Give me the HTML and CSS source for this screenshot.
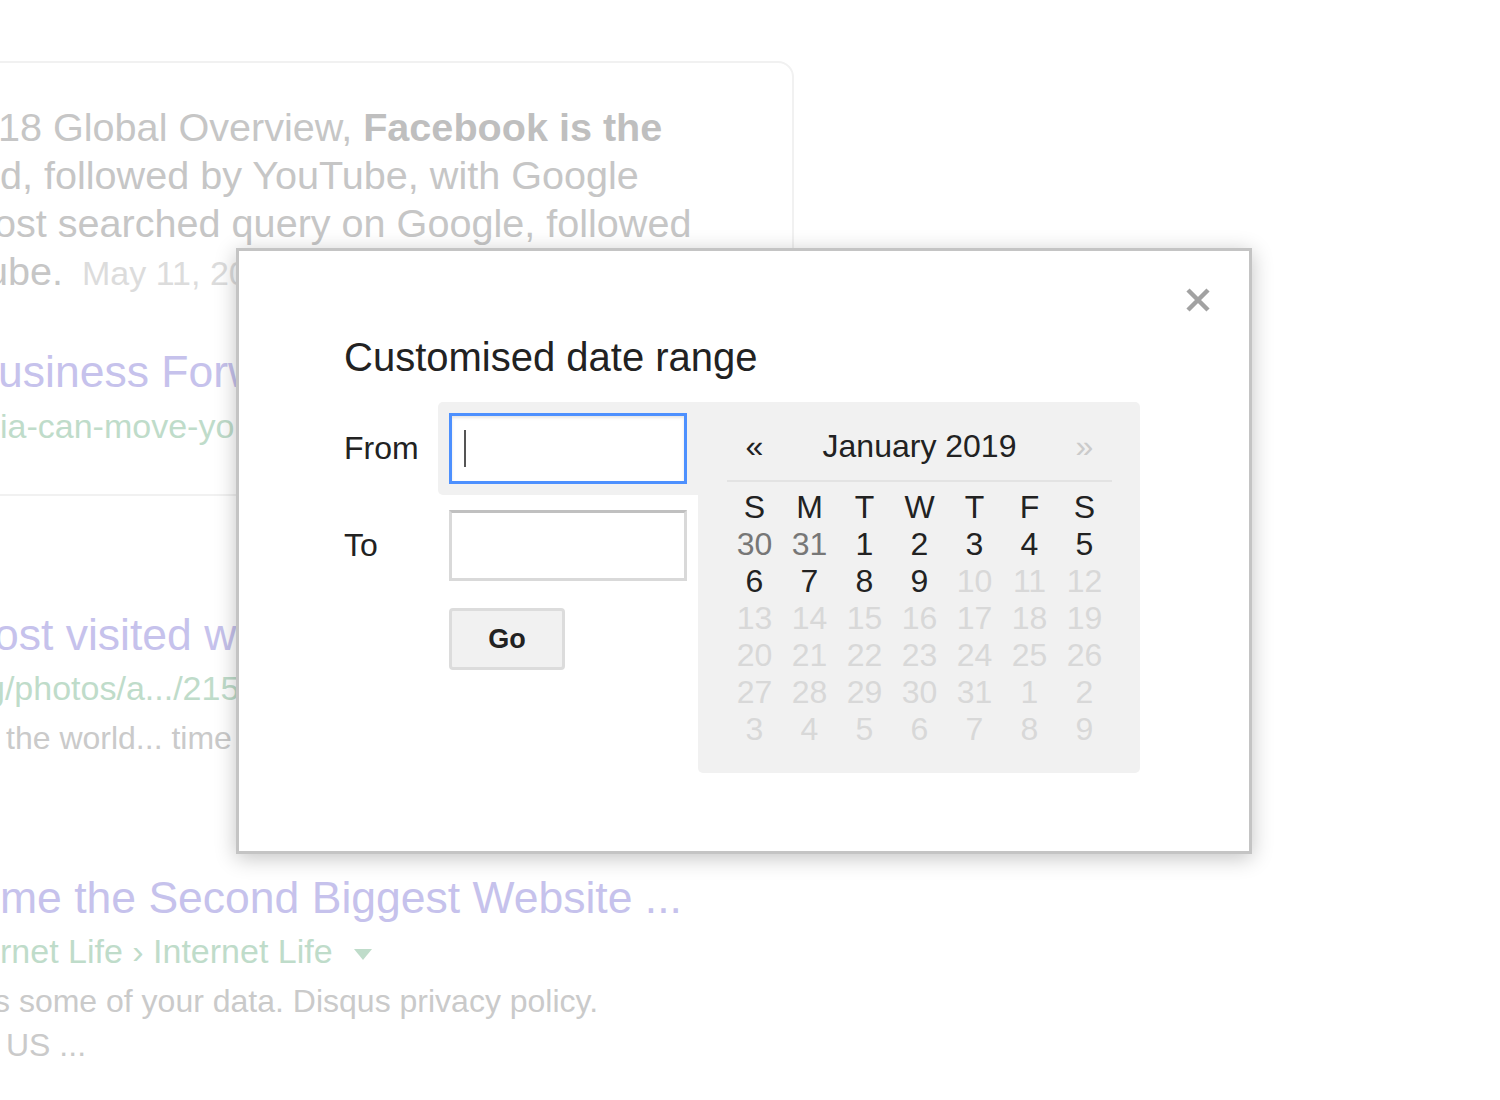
FILE: index.html
```html
<!DOCTYPE html>
<html lang="en">
<head>
    <meta charset="UTF-8">
    <title>Customised date range</title>
    <link rel="stylesheet" href="styles.css">
</head>
<body>
    <!-- 背景搜索结果 -->
    <div class="results">
        <div class="card">
            <div class="snippet">
                <div class="line cut-1">18 Global Overview, <b>Facebook is the</b></div>
                <div class="line">d, followed by YouTube, with Google</div>
                <div class="line cut-s">ost searched query on Google, followed</div>
                <div class="line cut-u">ube. <span class="date">May 11, 2018</span></div>
            </div>
            <div class="title cut-1">usiness Forward ...</div>
            <div class="url">ia-can-move-your-business-forward</div>
        </div>

        <div class="result first">
            <div class="title cut-s">ost visited websites in the world</div>
            <div class="url cut-g">g/photos/a.../2155552</div>
            <div class="snippet indent">the world... time spent per visitor</div>
        </div>

        <div class="result">
            <div class="title">me the Second Biggest Website ...</div>
            <div class="url">rnet Life › Internet Life <span class="arrow"></span></div>
            <div class="snippet cut-s">s some of your data. Disqus privacy policy.</div>
            <div class="snippet indent">US ...</div>
        </div>
    </div>

    <!-- 日期范围对话框 -->
    <div class="dialog">
        <svg class="close" width="26" height="26" viewBox="0 0 26 26">
            <path d="M3 3 L23 23 M23 3 L3 23" stroke="#a2a2a2" stroke-width="4.5" fill="none"/>
        </svg>
        <h2>Customised date range</h2>
        <div class="picker">
            <div class="fields">
                <div class="row active">
                    <label>From</label>
                    <div class="cell">
                        <div class="input"><span class="caret"></span></div>
                    </div>
                </div>
                <div class="row">
                    <label>To</label>
                    <div class="cell">
                        <div class="input"></div>
                    </div>
                </div>
                <div class="go-row">
                    <button class="go">Go</button>
                </div>
            </div>
            <div class="calendar">
                <div class="cal-head">
                    <span class="nav">«</span>
                    <span class="month">January 2019</span>
                    <span class="nav off">»</span>
                </div>
                <div class="days">
                    <span>S</span><span>M</span><span>T</span><span>W</span><span>T</span><span>F</span><span>S</span>
                    <span class="prev">30</span><span class="prev">31</span><span>1</span><span>2</span><span>3</span><span>4</span><span>5</span>
                    <span>6</span><span>7</span><span>8</span><span>9</span><span class="off">10</span><span class="off">11</span><span class="off">12</span>
                    <span class="off">13</span><span class="off">14</span><span class="off">15</span><span class="off">16</span><span class="off">17</span><span class="off">18</span><span class="off">19</span>
                    <span class="off">20</span><span class="off">21</span><span class="off">22</span><span class="off">23</span><span class="off">24</span><span class="off">25</span><span class="off">26</span>
                    <span class="off">27</span><span class="off">28</span><span class="off">29</span><span class="off">30</span><span class="off">31</span><span class="off">1</span><span class="off">2</span>
                    <span class="off">3</span><span class="off">4</span><span class="off">5</span><span class="off">6</span><span class="off">7</span><span class="off">8</span><span class="off">9</span>
                </div>
            </div>
        </div>
    </div>
</body>
</html>
```
FILE: styles.css
```css
/* 全局样式 */
* { box-sizing: border-box; }
html, body {
    margin: 0;
    padding: 0;
}
body {
    width: 1500px;
    height: 1100px;
    overflow: hidden;
    position: relative;
    background-color: #fff;
    font-family: "Liberation Sans", Arial, sans-serif;
}
/* 背景结果 */
.results {
    padding-top: 61px;
}
.results .title,
.results .url,
.results .snippet,
.results .line {
    white-space: nowrap;
}
.card {
    width: 814px;
    margin-left: -20px;
    padding: 40px 0 46px 18px;
    border: 2px solid #f1f1f1;
    border-radius: 0 16px 16px 16px;
}
.card .line {
    font-size: 39.6px;
    line-height: 48px;
    color: #c6c6c6;
}
.card .line b {
    color: #bfbfbf;
}
.card .date {
    font-size: 34px;
    color: #dcdcdc;
    margin-left: 8px;
}
.title {
    font-size: 44.5px;
    line-height: 54px;
    color: #c6c2ec;
}
.card .title {
    margin-top: 48px;
}
.url {
    margin-top: 5px;
    font-size: 34px;
    line-height: 44px;
    color: #bfdcca;
}
.result {
    margin-top: 111px;
}
.result.first {
    margin-top: 112px;
}
.result .url {
    margin-top: 4px;
}
.result .snippet {
    font-size: 32px;
    line-height: 44px;
    color: #cacaca;
}
.result .url + .snippet {
    margin-top: 6px;
}
.cut-1 { text-indent: -2px; }
.cut-s { text-indent: -6px; }
.cut-u { text-indent: -14px; }
.cut-g { text-indent: -14px; }
.indent { padding-left: 6px; }
.arrow {
    display: inline-block;
    margin-left: 12px;
    vertical-align: middle;
    border-left: 9px solid transparent;
    border-right: 9px solid transparent;
    border-top: 11px solid #bfdcca;
}
/* 对话框 */
.dialog {
    position: absolute;
    left: 236px;
    top: 248px;
    width: 1016px;
    height: 606px;
    padding: 82px 0 0 105px;
    background-color: #fff;
    border: 3px solid #c4c4c4;
    box-shadow: 0 4px 20px rgba(0, 0, 0, 0.24);
}
.dialog .close {
    position: absolute;
    top: 36px;
    right: 38px;
}
.dialog h2 {
    margin: 0;
    font-size: 40px;
    font-weight: normal;
    line-height: 48px;
    color: #222;
}
.picker {
    display: flex;
    align-items: flex-start;
    margin-top: 21px;
}
.fields {
    width: 354px;
}
.row {
    display: flex;
    align-items: center;
}
.row + .row {
    margin-top: 4px;
}
.row label {
    width: 94px;
    font-size: 32px;
    color: #222;
}
.cell {
    width: 260px;
    padding: 11px;
    border-radius: 5px 0 0 5px;
}
.row.active .cell {
    background-color: #f1f1f1;
}
.input {
    height: 71px;
    width: 238px;
    padding: 14px 12px;
    background-color: #fff;
    border: 3px solid #d9d9d9;
    border-top-color: #c0c0c0;
}
.row.active .input {
    border-color: #4d90fe;
    box-shadow: inset 0 2px 3px rgba(0, 0, 0, 0.1);
}
.caret {
    display: block;
    width: 2px;
    height: 37px;
    background-color: #555;
}
.go-row {
    padding: 16px 0 0 105px;
}
.go {
    width: 116px;
    height: 62px;
    padding: 0;
    background-color: #f1f1f1;
    border: 3px solid #dcdcdc;
    border-radius: 4px;
    font-family: "Liberation Sans", Arial, sans-serif;
    font-size: 27px;
    font-weight: bold;
    color: #222;
}
/* 日历 */
.calendar {
    width: 442px;
    height: 371px;
    padding: 26px 28px 0 29px;
    background-color: #f1f1f1;
    border-radius: 0 5px 5px 5px;
}
.cal-head {
    display: grid;
    grid-template-columns: 55px 1fr 55px;
    padding-bottom: 15px;
    border-bottom: 2px solid #e3e3e3;
    font-size: 32px;
    line-height: 37px;
    text-align: center;
    color: #222;
}
.cal-head .off {
    color: #cbcbcb;
}
.days {
    display: grid;
    grid-template-columns: repeat(7, 55px);
    margin-top: 7px;
    font-size: 32px;
    line-height: 37px;
    text-align: center;
    color: #222;
}
.days .prev {
    color: #777;
}
.days .off {
    color: #d8d8d8;
}
```
